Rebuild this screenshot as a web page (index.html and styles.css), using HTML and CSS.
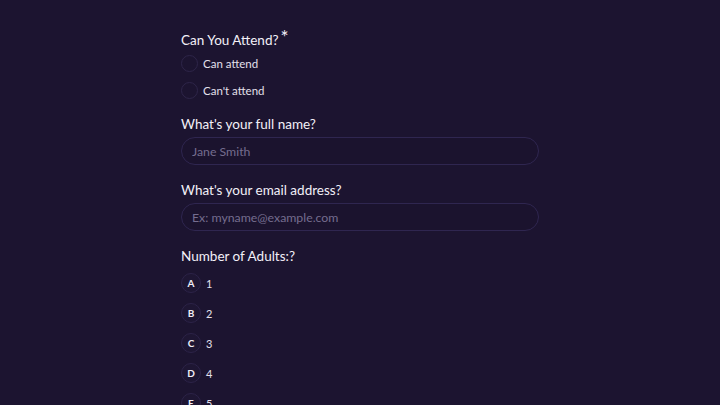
FILE: index.html
```html
<!DOCTYPE html>
<html lang="en">
<head>
  <meta charset="UTF-8">
  <meta name="viewport" content="width=device-width, initial-scale=1.0">
  <title>RSVP</title>
  <link rel="stylesheet" href="styles.css">
</head>
<body>
  <form class="form">
    <div class="field choice">
      <label class="label">Can You Attend?<span class="req">*</span></label>
      <label class="radio-row"><span class="radio"></span>Can attend</label>
      <label class="radio-row"><span class="radio"></span>Can't attend</label>
    </div>

    <div class="field">
      <label class="label" for="name">What's your full name?</label>
      <input id="name" class="text-input" type="text" placeholder="Jane Smith">
    </div>

    <div class="field">
      <label class="label" for="email">What's your email address?</label>
      <input id="email" class="text-input" type="email" placeholder="Ex: myname@example.com">
    </div>

    <div class="field">
      <label class="label">Number of Adults:?</label>
      <div class="letter-row"><span class="letter">A</span>1</div>
      <div class="letter-row"><span class="letter">B</span>2</div>
      <div class="letter-row"><span class="letter">C</span>3</div>
      <div class="letter-row"><span class="letter">D</span>4</div>
      <div class="letter-row"><span class="letter">E</span>5</div>
    </div>
  </form>
</body>
</html>
```

FILE: styles.css
```css
body { background-color: #1c1430; font-family: 'Lato', 'Open Sans', sans-serif; color: #f1eef7; margin: 0; overflow: hidden; }
.form { width: 358px; margin: 0 auto; padding-top: 28px; }
.field { display: flex; flex-direction: column; margin-bottom: 15px; }
.field.choice { margin-bottom: 10px; }
.label { font-size: 13.5px; line-height: 20px; height: 20px; color: #f3f0f8; }
.req { font-size: 19px; position: relative; top: -1px; margin-left: 2px; line-height: 1; }
.radio-row { display: flex; align-items: center; height: 27px; font-size: 11.5px; color: #e4e0ec; }
.label + .radio-row { margin-top: 2px; }
.radio { width: 15px; height: 15px; border: 1px solid #2e2549; border-radius: 50%; margin-right: 5px; }
.text-input { margin-top: 3px; height: 28px; box-sizing: border-box; border: 1px solid #2f2650; border-radius: 14px; background: #1b132e; padding: 0 10px; font-family: inherit; font-size: 12.3px; color: #e4e0ec; outline: none; }
.text-input::placeholder { color: #756d8f; }
.letter-row { display: flex; align-items: center; height: 30px; font-size: 11px; color: #e4e0ec; }
.label + .letter-row { margin-top: 2px; }
.letter { width: 18px; height: 18px; border: 1px solid #2c2348; background: #1e1633; border-radius: 50%; display: flex; align-items: center; justify-content: center; font-size: 10px; font-weight: 700; color: #f1eef7; margin-right: 5px; }
```
